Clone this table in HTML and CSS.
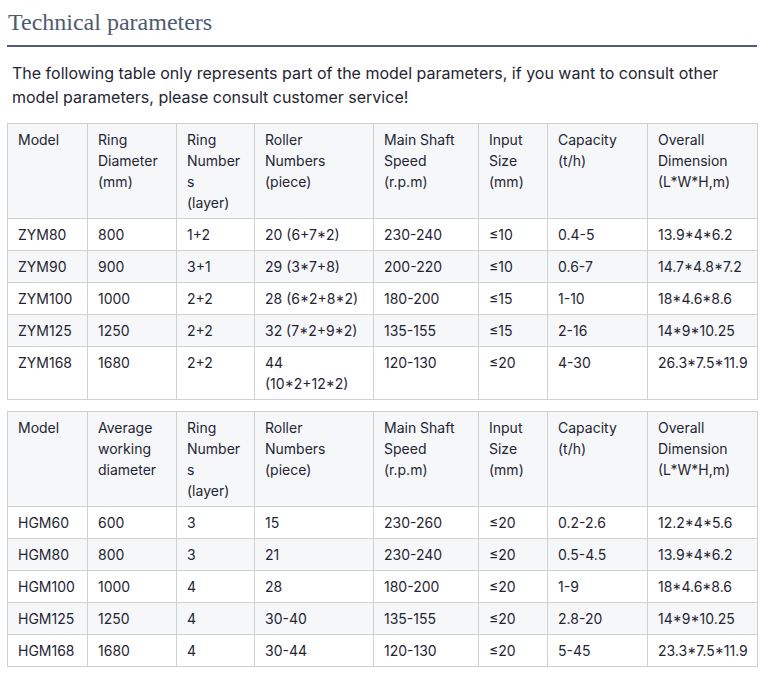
FILE: index.html
```html
<!DOCTYPE html>
<html>
<head>
<meta charset="utf-8">
<link rel="stylesheet" href="styles.css">
</head>
<body>
<div class="page">
  <h2 class="title">Technical parameters</h2>
  <p class="intro">The following table only represents part of the model parameters, if you want to consult other model parameters, please consult customer service!</p>
  <table class="spec">
    <colgroup><col class="c1"><col class="c2"><col class="c3"><col class="c4"><col class="c5"><col class="c6"><col class="c7"><col class="c8"></colgroup>
    <tr><td>Model</td><td>Ring<br>Diameter<br>(mm)</td><td>Ring<br>Number<br>s<br>(layer)</td><td>Roller<br>Numbers<br>(piece)</td><td>Main Shaft<br>Speed<br>(r.p.m)</td><td>Input<br>Size<br>(mm)</td><td>Capacity<br>(t/h)</td><td>Overall<br>Dimension<br>(L*W*H,m)</td></tr>
    <tr><td>ZYM80</td><td>800</td><td>1+2</td><td>20 (6+7*2)</td><td>230-240</td><td>≤10</td><td>0.4-5</td><td>13.9*4*6.2</td></tr>
    <tr><td>ZYM90</td><td>900</td><td>3+1</td><td>29 (3*7+8)</td><td>200-220</td><td>≤10</td><td>0.6-7</td><td>14.7*4.8*7.2</td></tr>
    <tr><td>ZYM100</td><td>1000</td><td>2+2</td><td>28 (6*2+8*2)</td><td>180-200</td><td>≤15</td><td>1-10</td><td>18*4.6*8.6</td></tr>
    <tr><td>ZYM125</td><td>1250</td><td>2+2</td><td>32 (7*2+9*2)</td><td>135-155</td><td>≤15</td><td>2-16</td><td>14*9*10.25</td></tr>
    <tr><td>ZYM168</td><td>1680</td><td>2+2</td><td>44<br>(10*2+12*2)</td><td>120-130</td><td>≤20</td><td>4-30</td><td>26.3*7.5*11.9</td></tr>
  </table>
  <table class="spec">
    <colgroup><col class="c1"><col class="c2"><col class="c3"><col class="c4"><col class="c5"><col class="c6"><col class="c7"><col class="c8"></colgroup>
    <tr><td>Model</td><td>Average<br>working<br>diameter</td><td>Ring<br>Number<br>s<br>(layer)</td><td>Roller<br>Numbers<br>(piece)</td><td>Main Shaft<br>Speed<br>(r.p.m)</td><td>Input<br>Size<br>(mm)</td><td>Capacity<br>(t/h)</td><td>Overall<br>Dimension<br>(L*W*H,m)</td></tr>
    <tr><td>HGM60</td><td>600</td><td>3</td><td>15</td><td>230-260</td><td>≤20</td><td>0.2-2.6</td><td>12.2*4*5.6</td></tr>
    <tr><td>HGM80</td><td>800</td><td>3</td><td>21</td><td>230-240</td><td>≤20</td><td>0.5-4.5</td><td>13.9*4*6.2</td></tr>
    <tr><td>HGM100</td><td>1000</td><td>4</td><td>28</td><td>180-200</td><td>≤20</td><td>1-9</td><td>18*4.6*8.6</td></tr>
    <tr><td>HGM125</td><td>1250</td><td>4</td><td>30-40</td><td>135-155</td><td>≤20</td><td>2.8-20</td><td>14*9*10.25</td></tr>
    <tr><td>HGM168</td><td>1680</td><td>4</td><td>30-44</td><td>120-130</td><td>≤20</td><td>5-45</td><td>23.3*7.5*11.9</td></tr>
  </table>
</div>
</body>
</html>
```
FILE: styles.css
```css
html, body { margin: 0; padding: 0; background: #fff; }
.page { width: 750px; margin-left: 7px; padding-top: 0; }
.title {
  margin: 0;
  padding: 8px 0 9px 1px;
  font-family: "Liberation Serif", "Times New Roman", serif;
  font-weight: normal;
  font-size: 24px;
  line-height: 28px;
  color: #4d5b72;
  border-bottom: 2px solid #4f5d75;
}
.intro {
  margin: 0;
  padding: 14px 5px 0 5px;
  font-family: Inter, "Noto Sans", sans-serif;
  font-size: 16px;
  line-height: 24px;
  color: #1f2533;
  margin-bottom: 14px;
}
.spec {
  width: 750px;
  table-layout: fixed;
  border-collapse: collapse;
  font-family: Inter, "Noto Sans", sans-serif;
  font-size: 14px;
  line-height: 21px;
  color: #1f2533;
  margin-bottom: 11px;
}
.spec td {
  border: 1px solid #d0d0d0;
  padding: 5px 10px;
  vertical-align: top;
}
.spec tr:nth-child(odd) { background: #f6f7f9; }
.spec tr:nth-child(even) { background: #fff; }
.c1 { width: 80px; }
.c2 { width: 89px; }
.c3 { width: 78px; }
.c4 { width: 119px; }
.c5 { width: 105px; }
.c6 { width: 69px; }
.c7 { width: 100px; }
.c8 { width: 110px; }
```
